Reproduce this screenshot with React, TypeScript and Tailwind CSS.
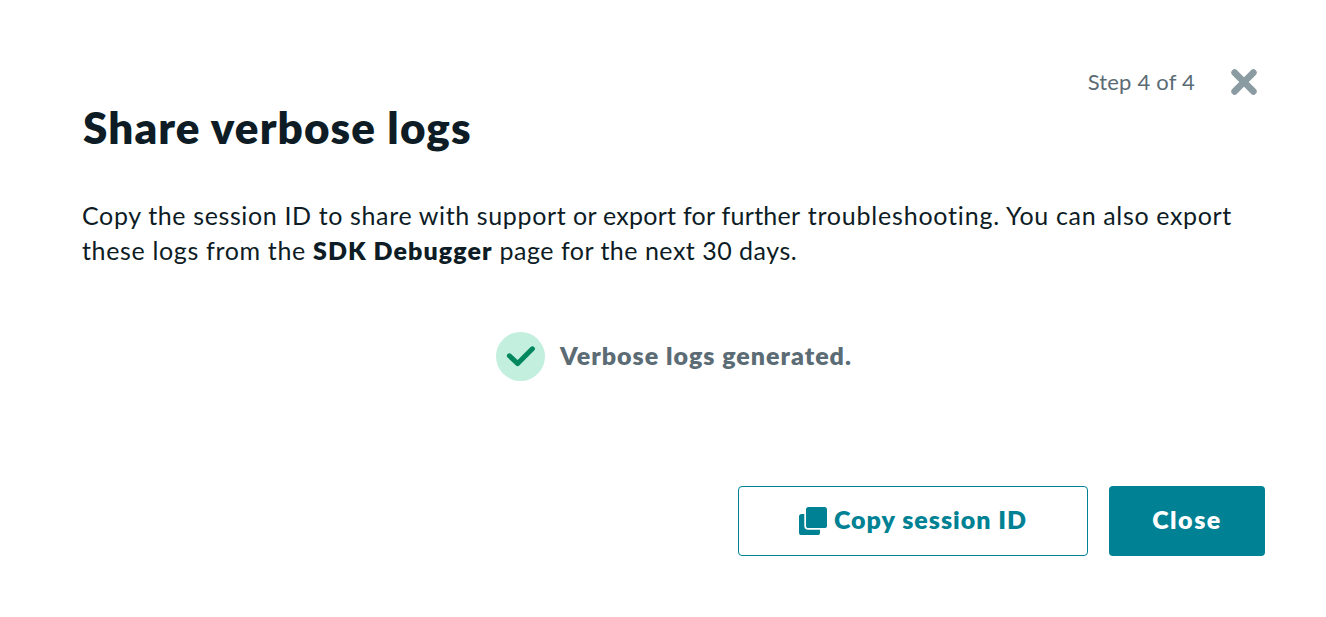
function CloseIcon() {
  return (
    <svg className="h-[26px] w-[26px]" viewBox="0 0 26 26" fill="none" stroke="#8b9ba2" strokeWidth="6.6" strokeLinecap="round">
      <path d="M3.6 3.6 22.4 22.4M22.4 3.6 3.6 22.4" />
    </svg>
  );
}

function CheckIcon() {
  return (
    <svg className="h-[49px] w-[49px] shrink-0" viewBox="0 0 49 49" fill="none">
      <circle cx="24.5" cy="24.5" r="24.5" fill="#c3efdf" />
      <path d="M13.4 23.8 21.7 31.6 36.4 16.8" stroke="#00875d" strokeWidth="5" strokeLinecap="round" strokeLinejoin="round" />
    </svg>
  );
}

function CopyIcon() {
  return (
    <svg className="h-7 w-7 shrink-0" viewBox="0 0 28 28" fill="#008294">
      <rect x="7" y="0" width="21" height="21" rx="2.6" />
      <path d="M2.6 7H5.3V18.7a4 4 0 0 0 4 4H21v2.7A2.6 2.6 0 0 1 18.4 28H2.6A2.6 2.6 0 0 1 0 25.4V9.6A2.6 2.6 0 0 1 2.6 7Z" />
    </svg>
  );
}

export default function App() {
  return (
    <main className="flex h-[617px] w-[1326px] flex-col bg-white pt-[66px] pr-[61px] pl-[82px] font-['Lato',sans-serif] text-[#0d1c25]">
      <header className="flex flex-col">
        <div className="flex h-8 items-center justify-end gap-[36px] pr-2">
          <span className="text-[22px] leading-8 tracking-[0.2px] text-[#5b6c75]">Step 4 of 4</span>
          <button type="button" aria-label="Close">
            <CloseIcon />
          </button>
        </div>
        <h1 className="pl-px text-[44px] leading-[58px] font-extrabold tracking-[1.1px]">Share verbose logs</h1>
      </header>
      <p className="mt-[42px] text-[25px] leading-[35px] whitespace-nowrap">
        <span className="tracking-[0.63px]">Copy the session ID to share with support</span>
        <span className="tracking-[0.27px]"> or export for further</span>
        <span className="tracking-[0.8px]"> troubleshooting.</span>
        <span className="tracking-[0.65px]"> You can also export</span>
        <br />
        <span className="tracking-[0.66px]">these logs from the </span>
        <strong className="font-extrabold tracking-[1.07px]">SDK Debugger</strong>
        <span className="tracking-[0.5px]"> page for the next 30 days.</span>
      </p>
      <div className="mt-[64px] ml-[414px] flex items-center gap-[15px]">
        <CheckIcon />
        <span className="pb-0.5 text-[25px] font-extrabold tracking-[1px] text-[#5b6c75]">Verbose logs generated.</span>
      </div>
      <footer className="mt-[105px] flex justify-end gap-[21px] text-[25px] font-extrabold">
        <button type="button" className="flex h-[70px] w-[350px] items-center justify-center gap-[7px] rounded-[4px] border border-[#008294] text-[#008294]">
          <CopyIcon />
          <span className="pb-0.5 tracking-[1px]">Copy session ID</span>
        </button>
        <button type="button" className="h-[70px] w-[156px] rounded-[4px] bg-[#008294] pb-0.5 tracking-[1.5px] text-white">Close</button>
      </footer>
    </main>
  );
}
